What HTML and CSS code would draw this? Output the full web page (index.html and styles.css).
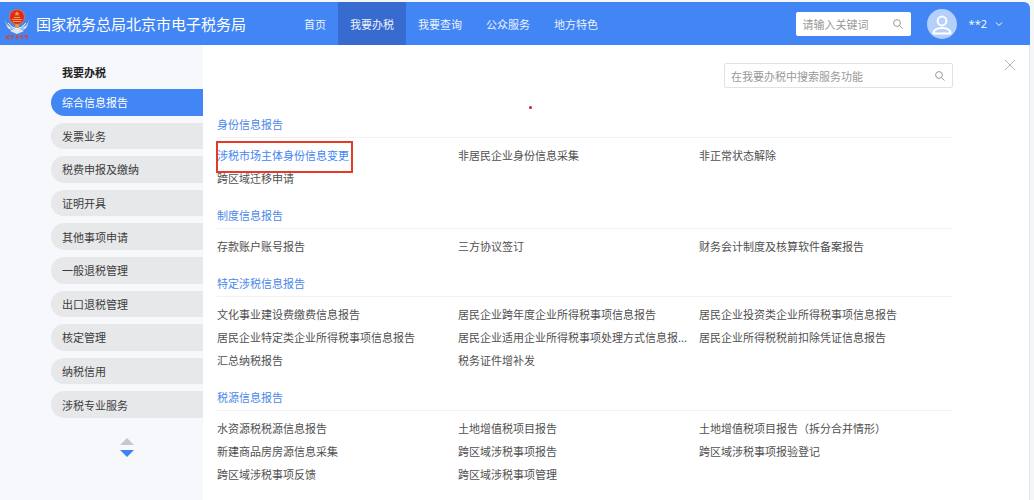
FILE: index.html
```html
<!DOCTYPE html>
<html lang="zh-CN">
<head>
<meta charset="utf-8">
<title>国家税务总局北京市电子税务局</title>
<link rel="stylesheet" href="styles.css">
</head>
<body>
<div class="app">
  <header class="header">
    <svg class="emblem" viewBox="0 0 26 32" aria-hidden="true">
      <path d="M1 12c1 7 4 11 12 13 8-2 11-6 12-13-2 5-5 7-12 8-7-1-10-3-12-8z" fill="#a9bbd6"/>
      <path d="M2 17l5 3-2 1zM24 17l-5 3 2 1zM6 23l7-3 7 3-7 3z" fill="#dfe6ef"/>
      <path d="M4 15q4 5 9 6 5-1 9-6" fill="none" stroke="#eef2f6" stroke-width="1"/>
      <circle cx="13" cy="9" r="8" fill="#d9705a"/>
      <circle cx="13" cy="9" r="7" fill="#dd2a1b"/>
      <path d="M13 3l1 2h2l-2 1 1 2-2-1-2 1 1-2-2-1h2zM8 11h10v1H8zM10 9h6v1h-6zM9 13h8v1H9z" fill="#f6a445"/>
      <circle cx="13" cy="18" r="2" fill="#e0a13c"/>
      <path d="M2 28l3 3M5 27l-3 4M7 28h3M8 27v4M12 28l3 2M14 27l-2 4M16 28h3M18 28v3M20 28h4M22 27l1 4" fill="none" stroke="#d8452f" stroke-width="1.3"/>
    </svg>
    <h1 class="brand">国家税务总局北京市电子税务局</h1>
    <nav class="topnav">
      <a class="topnav-link" href="#">首页</a>
      <a class="topnav-link is-active" href="#">我要办税</a>
      <a class="topnav-link" href="#">我要查询</a>
      <a class="topnav-link" href="#">公众服务</a>
      <a class="topnav-link" href="#">地方特色</a>
    </nav>
    <div class="search search-top">
      <input class="search-input" type="text" placeholder="请输入关键词" aria-label="请输入关键词">
      <svg class="search-icon" viewBox="0 0 10 10" aria-hidden="true"><circle cx="4" cy="4" r="3.4"/><path d="M6.5 6.5L9.5 9.5"/></svg>
    </div>
    <button class="user" type="button">
      <svg class="avatar" viewBox="0 0 30 30" aria-hidden="true">
        <circle cx="15" cy="15" r="15" fill="#b3cffb"/>
        <circle cx="15" cy="12" r="4.4"/>
        <path d="M6.500 24.500c0-4 4-5.500 8.500-5.500s8.500 1.500 8.500 5.500z"/>
      </svg>
      <span class="user-name">**2</span>
      <svg class="chevron" viewBox="0 0 8 8" aria-hidden="true"><path d="M1 2.500L4 5.500 7 2.500"/></svg>
    </button>
  </header>
  <div class="body">
    <aside class="sidebar">
      <h2 class="sidebar-title">我要办税</h2>
      <nav class="menu">
        <a class="menu-item is-active" href="#">综合信息报告</a>
        <a class="menu-item" href="#">发票业务</a>
        <a class="menu-item" href="#">税费申报及缴纳</a>
        <a class="menu-item" href="#">证明开具</a>
        <a class="menu-item" href="#">其他事项申请</a>
        <a class="menu-item" href="#">一般退税管理</a>
        <a class="menu-item" href="#">出口退税管理</a>
        <a class="menu-item" href="#">核定管理</a>
        <a class="menu-item" href="#">纳税信用</a>
        <a class="menu-item" href="#">涉税专业服务</a>
      </nav>
      <div class="pager">
        <button class="pager-button" type="button" aria-label="上一页"><svg viewBox="0 0 14 7"><path d="M7 0l7 7H0z" fill="#c6c7c9"/></svg></button>
        <button class="pager-button" type="button" aria-label="下一页"><svg viewBox="0 0 14 7"><path d="M0 0h14L7 7z" fill="#3f82f5"/></svg></button>
      </div>
    </aside>
    <main class="content">
      <button class="close" type="button" aria-label="关闭"><svg viewBox="0 0 10 10"><path d="M0 0l10 10M10 0L0 10"/></svg></button>
      <span class="dot"></span>
      <div class="search search-main">
        <input class="search-input" type="text" placeholder="在我要办税中搜索服务功能" aria-label="在我要办税中搜索服务功能">
        <svg class="search-icon" viewBox="0 0 10 10" aria-hidden="true"><circle cx="4" cy="4" r="3.4"/><path d="M6.5 6.5L9.5 9.5"/></svg>
      </div>
      <section class="group">
        <h3 class="group-title">身份信息报告</h3>
        <div class="links">
          <a class="link is-current" href="#">涉税市场主体身份信息变更</a>
          <a class="link" href="#">非居民企业身份信息采集</a>
          <a class="link" href="#">非正常状态解除</a>
          <a class="link" href="#">跨区域迁移申请</a>
        </div>
      </section>
      <section class="group">
        <h3 class="group-title">制度信息报告</h3>
        <div class="links">
          <a class="link" href="#">存款账户账号报告</a>
          <a class="link" href="#">三方协议签订</a>
          <a class="link" href="#">财务会计制度及核算软件备案报告</a>
        </div>
      </section>
      <section class="group">
        <h3 class="group-title">特定涉税信息报告</h3>
        <div class="links">
          <a class="link" href="#">文化事业建设费缴费信息报告</a>
          <a class="link" href="#">居民企业跨年度企业所得税事项信息报告</a>
          <a class="link" href="#">居民企业投资类企业所得税事项信息报告</a>
          <a class="link" href="#">居民企业特定类企业所得税事项信息报告</a>
          <a class="link" href="#">居民企业适用企业所得税事项处理方式信息报...</a>
          <a class="link" href="#">居民企业所得税税前扣除凭证信息报告</a>
          <a class="link" href="#">汇总纳税报告</a>
          <a class="link" href="#">税务证件增补发</a>
        </div>
      </section>
      <section class="group">
        <h3 class="group-title">税源信息报告</h3>
        <div class="links">
          <a class="link" href="#">水资源税税源信息报告</a>
          <a class="link" href="#">土地增值税项目报告</a>
          <a class="link" href="#">土地增值税项目报告（拆分合并情形）</a>
          <a class="link" href="#">新建商品房房源信息采集</a>
          <a class="link" href="#">跨区域涉税事项报告</a>
          <a class="link" href="#">跨区域涉税事项报验登记</a>
          <a class="link" href="#">跨区域涉税事项反馈</a>
          <a class="link" href="#">跨区域涉税事项管理</a>
        </div>
      </section>
    </main>
  </div>
</div>
</body>
</html>
```
FILE: styles.css
```css
* {
  box-sizing: border-box;
}

body {
  margin: 0;
  padding: 2px 4px 0 0;
  background: #f4f6f8;
  color: #505050;
  font-family: "Noto Sans CJK SC", "Liberation Sans", sans-serif;
  font-size: 11px;
}

a {
  color: inherit;
  text-decoration: none;
}

button {
  padding: 0;
  border: 0;
  background: none;
  color: inherit;
  font: inherit;
  cursor: pointer;
}

svg {
  display: block;
}

h1,
h2,
h3 {
  margin: 0;
}

.app {
  display: flex;
  flex-direction: column;
  min-height: calc(100vh - 2px);
  border-right: 1px solid #e6e8ea;
  border-top-right-radius: 6px;
}

.header {
  display: flex;
  align-items: center;
  height: 43px;
  margin-right: -1px;
  padding-right: 27px;
  border-top-right-radius: 6px;
  background: #4285f4;
  color: #fff;
}

.emblem {
  width: 26px;
  height: 32px;
  margin: 0 6px 0 4px;
}

.brand {
  font-size: 15px;
  font-weight: 400;
}

.topnav {
  display: flex;
  align-self: stretch;
  margin: 0 auto 0 46px;
}

.topnav-link {
  display: flex;
  align-items: center;
  padding: 0 12px;
  color: #edf3fe;
}

.topnav-link.is-active {
  background: #376bd0;
}

.search {
  display: flex;
  align-items: center;
  border-radius: 2px;
  background: #fff;
}

.search-input {
  flex: 1;
  min-width: 0;
  padding: 0;
  border: 0;
  outline: 0;
  background: none;
  color: #484848;
  font: inherit;
}

.search-input::placeholder {
  color: #999;
}

.search-icon {
  width: 10px;
  height: 10px;
  fill: none;
  stroke: #999;
}

.search-top {
  width: 115px;
  height: 24px;
  padding: 0 8px 0 7px;
}

.user {
  display: flex;
  align-items: center;
  margin-left: 16px;
}

.avatar {
  width: 30px;
  height: 30px;
  fill: none;
  stroke: #fff;
  stroke-width: 2;
}

.avatar circle:first-child {
  stroke: none;
}

.user-name {
  margin: 0 8px 0 12px;
  font-family: "Open Sans", sans-serif;
  font-size: 11px;
}

.chevron {
  width: 8px;
  height: 8px;
  fill: none;
  stroke: #fff;
}

.body {
  display: flex;
  flex: 1;
}

.sidebar {
  width: 203px;
  padding: 17px 0 0 51px;
  background: #f6f8fb;
}

.sidebar-title {
  padding-left: 11px;
  color: #222;
  font-size: 11px;
  line-height: 20px;
}

.menu {
  display: flex;
  flex-direction: column;
  gap: 7px;
  height: 329px;
  margin-top: 7px;
}

.menu-item {
  display: flex;
  flex: 1;
  align-items: center;
  padding-left: 11px;
  border-radius: 14px 0 0 14px;
  background: #e7e8ea;
  color: #3c3c3c;
}

.menu-item.is-active {
  background: #4285f4;
  color: #fff;
}

.pager {
  display: flex;
  flex-direction: column;
  align-items: center;
  gap: 5px;
  padding-top: 20px;
}

.pager-button {
  width: 14px;
  height: 7px;
}

.content {
  position: relative;
  flex: 1;
  min-width: 0;
  padding: 18px 76px 0 14px;
  background: #fff;
}

.search-main {
  width: 229px;
  height: 25px;
  margin: 0 0 23px auto;
  padding: 0 7px 0 6px;
  border: 1px solid #e2e2e2;
}

.close {
  position: absolute;
  top: 15px;
  right: 14px;
}

.close svg {
  width: 10px;
  height: 10px;
  overflow: visible;
  fill: none;
  stroke: #b5b5b5;
}

.dot {
  position: absolute;
  top: 61px;
  left: 326px;
  width: 3px;
  height: 3px;
  border-radius: 50%;
  background: #c8202c;
}

.group {
  padding-bottom: 12px;
}

.group-title {
  border-bottom: 1px solid #f1f1f1;
  color: #4b87e8;
  font-size: 11px;
  font-weight: 400;
  line-height: 26px;
}

.links {
  display: grid;
  grid-template-columns: 241fr 241fr 254fr;
  padding-top: 6px;
}

.link {
  justify-self: start;
  line-height: 23px;
  white-space: nowrap;
}

.link.is-current {
  position: relative;
  color: #4285f4;
}

.link.is-current::after {
  content: "";
  position: absolute;
  inset: -3px -4px -6px -1px;
  border: 2px solid #e33a2a;
}
```
